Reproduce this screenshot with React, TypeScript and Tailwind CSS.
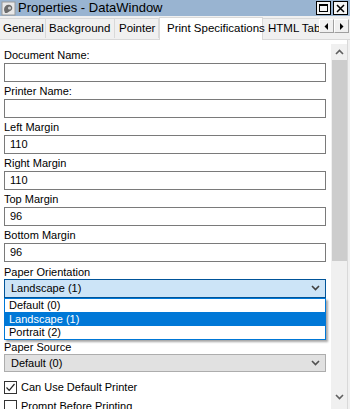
import React from "react";

const FONT = "font-['Tahoma','Liberation_Sans',sans-serif]";

function Field({ label, value }: { label: string; value?: string }) {
  return (
    <div>
      <div className="h-[17px] pt-[3px] leading-[13px]">{label}</div>
      <div className="h-[19px] border border-[#7a7a7a] bg-white pl-[5px] leading-[17px]">{value}</div>
    </div>
  );
}

function Chevron({ up, color = "#606060" }: { up?: boolean; color?: string }) {
  return (
    <svg width="9" height="6" viewBox="0 0 9 6">
      <path
        d={up ? "M1 5 L4.5 1.5 L8 5" : "M1 1 L4.5 4.5 L8 1"}
        fill="none"
        stroke={color}
        strokeWidth="1.6"
      />
    </svg>
  );
}

function Check({ checked, label }: { checked?: boolean; label: string }) {
  return (
    <div className="flex items-center gap-[4px] h-[19px]">
      <div className="w-[13px] h-[13px] border border-[#333] bg-white flex items-center justify-center">
        {checked && (
          <svg width="11" height="11" viewBox="0 0 11 11">
            <path d="M1.5 5.5 L4.2 8.3 L9.5 2" fill="none" stroke="#222" strokeWidth="1.2" />
          </svg>
        )}
      </div>
      <span className="leading-[13px]">{label}</span>
    </div>
  );
}

export default function App() {
  const tabs = ["General", "Background", "Pointer"];
  return (
    <div className={`w-[350px] h-[409px] overflow-hidden bg-[#f0f0f0] flex flex-col text-[11px] text-black ${FONT}`}>
      {/* title bar */}
      <div className="h-[16px] bg-[#99b4d1] flex items-center shrink-0">
        <svg width="15" height="15" viewBox="0 0 15 15" className="ml-[1px]">
          <rect x="1" y="1" width="13" height="13" fill="#e8e8e8" stroke="#9a9a9a" />
          <path d="M3 9 C3 5 6 3 9 4 C12 5 12 9 9 10 L6 12 L4 12 Z" fill="#6b6b6b" />
          <circle cx="8.5" cy="7" r="1.6" fill="#d0d0d0" />
        </svg>
        <span className="ml-[2px] text-[13px] leading-[16px] whitespace-nowrap font-['Liberation_Sans',sans-serif]">Properties - DataWindow</span>
        <div className="ml-auto flex gap-[2px] mr-[2px]">
          <div className="w-[15px] h-[14px] border border-black bg-[#f4f4f4] flex items-center justify-center">
            <div className="w-[9px] h-[8px] border border-black border-t-2" />
          </div>
          <div className="w-[15px] h-[14px] border border-black bg-[#f4f4f4] flex items-center justify-center">
            <svg width="9" height="9" viewBox="0 0 9 9">
              <path d="M1 1 L8 8 M8 1 L1 8" stroke="black" strokeWidth="1.5" />
            </svg>
          </div>
        </div>
      </div>

      {/* tabs */}
      <div className="h-[23px] flex items-end shrink-0 relative text-[11.5px] whitespace-nowrap font-['Liberation_Sans',sans-serif]">
        {tabs.map((t, i) => (
          <div
            key={t}
            className={`h-[20px] shrink-0 flex items-center border-t border-r border-[#d9d9d9] bg-[#f0f0f0] mb-[1px] ${i === 0 ? "w-[46px] pl-[3px]" : i === 1 ? "w-[69px] pl-[3px]" : "w-[44px] pl-[4px]"}`}
          >
            {t}
          </div>
        ))}
        <div className="h-[23px] w-[104px] shrink-0 flex items-center pl-[7px] bg-white border-t border-l border-r border-[#d9d9d9] mb-[-1px] relative z-10">
          Print Specifications
        </div>
        <div className="h-[20px] w-[57px] shrink-0 flex items-center pl-[5px] border-t border-[#d9d9d9] mb-[1px] overflow-hidden">
          HTML Tabl
        </div>
        <div className="absolute right-[1px] top-[3px] flex">
          {[0, 1].map((k) => (
            <div key={k} className="w-[15px] h-[14px] bg-[#f0f0f0] border-t border-l border-white border-r border-b border-r-[#a0a0a0] border-b-[#a0a0a0] flex items-center justify-center">
              <svg width="5" height="7" viewBox="0 0 5 7">
                <path d={k === 0 ? "M4 0 L0.5 3.5 L4 7 Z" : "M1 0 L4.5 3.5 L1 7 Z"} fill="black" />
              </svg>
            </div>
          ))}
        </div>
      </div>

      {/* content */}
      <div className="flex-1 flex bg-white border-t border-[#d9d9d9] min-h-0">
        <div className="w-[331px] pl-[4px] pr-[5px] pt-[6px] flex flex-col">
          <Field label="Document Name:" />
          <Field label="Printer Name:" />
          <Field label="Left Margin" value="110" />
          <Field label="Right Margin" value="110" />
          <Field label="Top Margin" value="96" />
          <Field label="Bottom Margin" value="96" />

          <div className="h-[18px] pt-[4px] leading-[13px]">Paper Orientation</div>
          <div className="h-[20px] border border-[#005499] bg-[#cce4f7] pl-[6px] pr-[5px] flex items-center justify-between">
            <span>Landscape (1)</span>
            <Chevron color="#404040" />
          </div>
          <div className="w-[322px] h-[42px] border border-[#0078d7] bg-white shadow-[2px_2px_2px_rgba(0,0,0,0.35)] relative z-10">
            <div className="h-[13px] leading-[13px] pl-[4px]">Default (0)</div>
            <div className="h-[14px] leading-[14px] pl-[4px] bg-[#0078d7] text-white">Landscape (1)</div>
            <div className="h-[13px] leading-[13px] pl-[4px]">Portrait (2)</div>
          </div>

          <div className="h-[15px] pt-[1px] leading-[13px]">Paper Source</div>
          <div className="h-[20px] border border-[#adadad] bg-[#e1e1e1] pl-[6px] pr-[5px] flex items-center justify-between">
            <span>Default (0)</span>
            <Chevron color="#505050" />
          </div>
          <div className="pt-[6px]">
            <Check checked label="Can Use Default Printer" />
            <Check label="Prompt Before Printing" />
          </div>
        </div>

        {/* scrollbar */}
        <div className="w-[16px] mt-[4px] bg-[#f0f0f0] flex flex-col items-center">
          <div className="h-[16px] flex items-center justify-center">
            <Chevron up />
          </div>
          <div className="w-[15px] h-[201px] bg-[#cdcdcd]" />
          <div className="flex-1" />
          <div className="h-[16px] flex items-center justify-center mb-[4px]">
            <Chevron />
          </div>
        </div>
        <div className="w-[1px] bg-[#d9d9d9]" />
        <div className="w-[2px] bg-[#f0f0f0]" />
      </div>
    </div>
  );
}
